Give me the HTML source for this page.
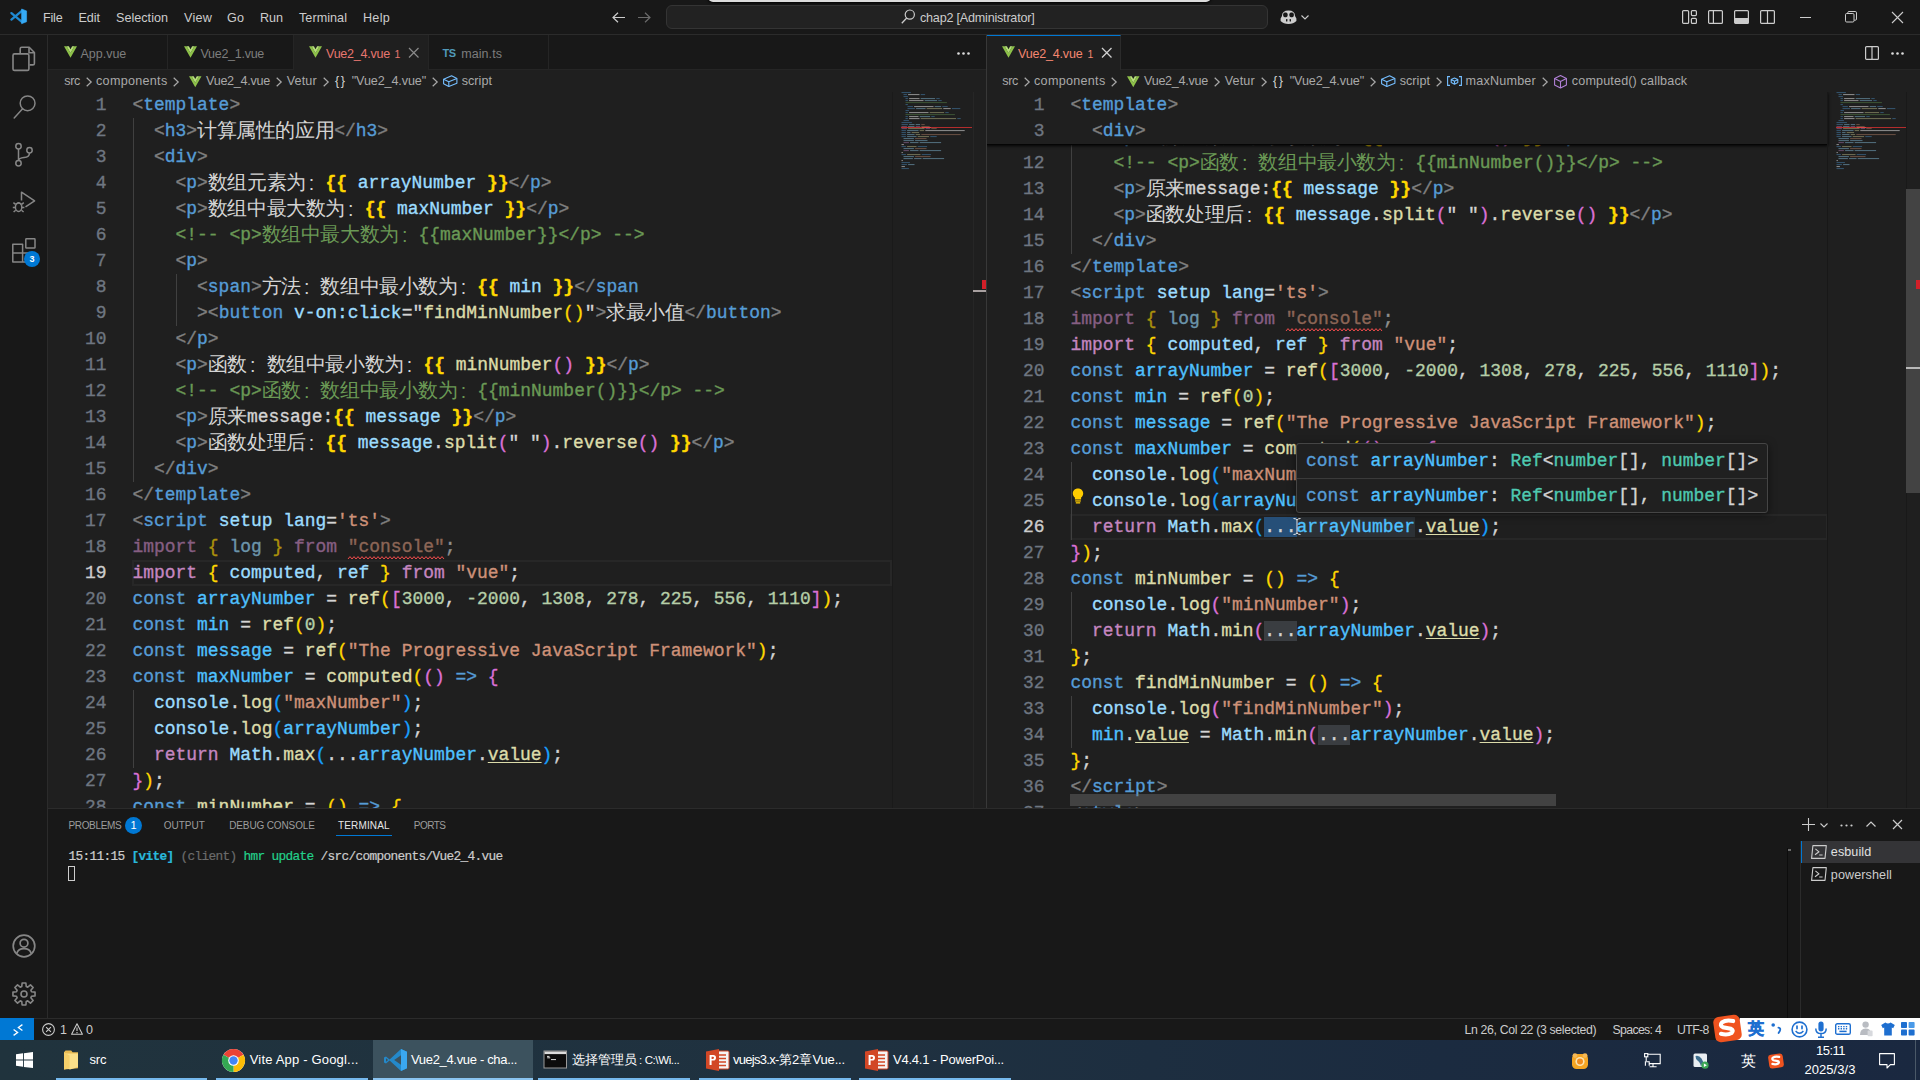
<!DOCTYPE html>
<html><head><meta charset="utf-8"><title>VS Code</title><style>
*{box-sizing:border-box;margin:0;padding:0}
html,body{width:1920px;height:1080px;overflow:hidden;background:#181818;font-family:"Liberation Sans",sans-serif;color:#ccc}
.a{position:absolute}
.t{position:absolute;white-space:pre;font-size:13px;line-height:20px;height:20px;color:#ccc}
.ed{position:absolute;background:#1f1f1f;overflow:hidden;font-family:"Liberation Mono",monospace;font-size:17.95px;color:#d4d4d4;-webkit-text-stroke:0.35px}
.ln{position:absolute;left:0;height:26px;line-height:26px;text-align:right;color:#6e7681;white-space:pre}
.ln.on{color:#ccc}
.cl{position:absolute;height:26px;line-height:26px;white-space:pre}
.z{display:inline-block;font-size:19.6px;font-family:"Liberation Sans",sans-serif;white-space:nowrap;overflow:visible;vertical-align:top;height:26px;line-height:26px;letter-spacing:-0.4px;-webkit-text-stroke:0;position:relative;top:-1px}
.zc{width:19.6px;padding-left:3px;letter-spacing:0;top:0}
.g{color:#808080}.k{color:#569cd6}.c{color:#c586c0}.v{color:#9cdcfe}.n{color:#4fc1ff}.f{color:#dcdcaa}
.s{color:#ce9178}.m{color:#b5cea8}.cm{color:#6a9955}.b1{color:#ffd700}.b2{color:#da70d6}.b3{color:#179fff}
.y{color:#ffd700;font-weight:bold}.ty{color:#4ec9b0}
.u{color:#dcdcaa;text-decoration:underline;text-decoration-thickness:1px;text-underline-offset:2px}
.fade{opacity:.62}
.sq{display:inline-block;height:26px;vertical-align:top;position:relative}
.sq svg{left:0;top:21.5px}
.dots.h2{background:#3a3d41}
.dots.sel{background:#264f78}
.wh{background:#2c3136}
.ig{position:absolute;width:1px;background:#404040}
.hl{position:absolute;height:26px;border:2px solid #272727}
svg{position:absolute;overflow:visible}
</style></head><body>
<div class="a" style="left:0px;top:0px;width:1920px;height:35px;background:#181818;border-bottom:1px solid #2b2b2b"></div>
<svg style="left:9.7px;top:9.3px" width="16.6" height="14.7" viewBox="0 0 16.6 14.7" ><path d="M12.2 1.6L1.4 10.6M12.2 13.1L1.4 4.1" stroke="#1f8ad2" stroke-width="2.3" stroke-linecap="round" fill="none"/><path d="M11.6 0L16.6 1.9V12.8L11.6 14.7z" fill="#35aaf5"/><path d="M11.6 0L16.6 1.9V12.8L11.6 14.7z" fill="none" stroke="#35aaf5" stroke-width=".6" stroke-linejoin="round"/></svg>
<div class="t" style="left:43px;top:7.5px;font-size:12.6px;color:#ccc;letter-spacing:-0.199px;">File</div>
<div class="t" style="left:78.5px;top:7.5px;font-size:12.6px;color:#ccc;letter-spacing:-0.051px;">Edit</div>
<div class="t" style="left:116px;top:7.5px;font-size:12.6px;color:#ccc;letter-spacing:0.021px;">Selection</div>
<div class="t" style="left:184px;top:7.5px;font-size:12.6px;color:#ccc;letter-spacing:0.230px;">View</div>
<div class="t" style="left:227px;top:7.5px;font-size:12.6px;color:#ccc;letter-spacing:0.094px;">Go</div>
<div class="t" style="left:260px;top:7.5px;font-size:12.6px;color:#ccc;letter-spacing:-0.036px;">Run</div>
<div class="t" style="left:299px;top:7.5px;font-size:12.6px;color:#ccc;letter-spacing:0.051px;">Terminal</div>
<div class="t" style="left:363px;top:7.5px;font-size:12.6px;color:#ccc;letter-spacing:0.273px;">Help</div>
<svg style="left:612px;top:12px" width="13" height="11" viewBox="0 0 13 11" ><path d="M6 0.7L1 5.5 6 10.3M1 5.5H13" fill="none" stroke="#ccc" stroke-width="1.2"/></svg>
<svg style="left:638px;top:12px" width="13" height="11" viewBox="0 0 13 11" ><path d="M7 0.7L12 5.5 7 10.3M12 5.5H0" fill="none" stroke="#6b6b6b" stroke-width="1.2"/></svg>
<div class="a" style="left:666px;top:5px;width:602px;height:24px;background:#222222;border:1px solid #343434;border-radius:6px"></div>
<svg style="left:901px;top:9px" width="14" height="15" viewBox="0 0 14 15" ><circle cx="8.8" cy="5.6" r="4.6" fill="none" stroke="#ccc" stroke-width="1.2"/><path d="M5.7 9L0.8 14.2" stroke="#ccc" stroke-width="1.3"/></svg>
<div class="t" style="left:920px;top:7.5px;font-size:12.6px;color:#ccc;letter-spacing:-0.214px;">chap2 [Administrator]</div>
<div class="a" style="left:708px;top:-8px;width:503px;height:10px;background:#dcdcdc;border-radius:6px;box-shadow:0 1px 3px #000"></div>
<svg style="left:1280px;top:9px" width="17" height="16" viewBox="0 0 17 16" ><path d="M2 7Q2 1.5 8.5 1.5 15 1.5 15 7L16.4 9.5V12Q13.5 15 8.5 15 3.5 15 0.6 12V9.5z" fill="#ccc"/><rect x="3.2" y="3.6" width="4.4" height="4.6" rx="1.6" fill="#181818"/><rect x="9.4" y="3.6" width="4.4" height="4.6" rx="1.6" fill="#181818"/><rect x="6" y="10" width="1.4" height="2.6" rx=".6" fill="#181818"/><rect x="9.6" y="10" width="1.4" height="2.6" rx=".6" fill="#181818"/></svg>
<svg style="left:1301px;top:15px" width="8" height="5" viewBox="0 0 8 5" ><path d="M0.5 0.5L4 4 7.5 0.5" fill="none" stroke="#ccc" stroke-width="1.1"/></svg>
<svg style="left:1682px;top:10px" width="15" height="14" viewBox="0 0 15 14" ><g fill="none" stroke="#ccc" stroke-width="1.2"><rect x="0.6" y="0.6" width="6" height="12.8" rx="1"/><rect x="9.4" y="0.6" width="5" height="5" rx="1"/><rect x="9.4" y="8.4" width="5" height="5" rx="1"/></g></svg>
<svg style="left:1708px;top:10px" width="15" height="14" viewBox="0 0 15 14" ><g fill="none" stroke="#ccc" stroke-width="1.2"><rect x="0.6" y="0.6" width="13.8" height="12.8" rx="1"/><path d="M5.4 0.6V13.4"/></g></svg>
<svg style="left:1734px;top:10px" width="15" height="14" viewBox="0 0 15 14" ><g fill="none" stroke="#ccc" stroke-width="1.2"><rect x="0.6" y="0.6" width="13.8" height="12.8" rx="1"/></g><rect x="1" y="8" width="13" height="5.4" fill="#ccc"/></svg>
<svg style="left:1760px;top:10px" width="15" height="14" viewBox="0 0 15 14" ><g fill="none" stroke="#ccc" stroke-width="1.2"><rect x="0.6" y="0.6" width="13.8" height="12.8" rx="1"/><path d="M7.5 0.6V13.4"/></g></svg>
<div class="a" style="left:1800px;top:17px;width:11px;height:1px;background:#ccc;"></div>
<svg style="left:1845px;top:11px" width="12" height="12" viewBox="0 0 12 12" ><g fill="none" stroke="#ccc" stroke-width="1"><rect x="0.5" y="2.5" width="8.5" height="8.5" rx="1.2"/><path d="M2.8 2.5V1.6Q2.8 0.5 3.9 0.5H10.2Q11.5 0.5 11.5 1.8V8Q11.5 9.2 10.4 9.2H9.2"/></g></svg>
<svg style="left:1892.0px;top:12.0px" width="11" height="11" viewBox="0 0 11 11" ><path d="M0 0L11 11M11 0L0 11" stroke="#ccc" stroke-width="1.1" fill="none"/></svg>
<div class="a" style="left:0px;top:35px;width:48px;height:983px;background:#181818;border-right:1px solid #2b2b2b"></div>
<svg style="left:12px;top:46px" width="24" height="24" viewBox="0 0 24 24" ><g fill="none" stroke="#868686" stroke-width="1.6" stroke-linejoin="round"><path d="M8.2 7.6V2.8Q8.2 1.3 9.7 1.3H17.2L22.4 6.5V17.4Q22.4 18.9 20.9 18.9H17.6"/><path d="M17 1.5V6.7H22.2"/><path d="M1 9.4Q1 7.9 2.5 7.9H15.4Q16.9 7.9 16.9 9.4V22.9Q16.9 24.4 15.4 24.4H2.5Q1 24.4 1 22.9z"/></g></svg>
<svg style="left:12px;top:94px" width="24" height="24" viewBox="0 0 24 24" ><g fill="none" stroke="#868686" stroke-width="1.5"><circle cx="15.6" cy="9.3" r="7.4"/><path d="M10.6 14.8L2.2 24" stroke-linecap="round"/></g></svg>
<svg style="left:12px;top:142px" width="24" height="24" viewBox="0 0 24 24" ><g fill="none" stroke="#868686" stroke-width="1.5"><circle cx="6.5" cy="4.3" r="2.7"/><circle cx="6.5" cy="21.3" r="2.7"/><circle cx="17.5" cy="8.2" r="2.7"/><path d="M6.5 7V18.6M17.5 10.9Q17.5 15 12 15.6 7 16.2 6.5 18.6"/></g></svg>
<svg style="left:12px;top:190px" width="24" height="24" viewBox="0 0 24 24" ><g fill="none" stroke="#868686" stroke-width="1.5" stroke-linejoin="round"><path d="M9.5 10.5V2.2L22.6 10.8 13.5 16.8"/><ellipse cx="6.6" cy="17.2" rx="3.2" ry="4.2"/><path d="M3.6 14.3L1.4 12.6M9.6 14.3L11.8 12.6M3.4 17.4H0.8M9.8 17.4H12.4M3.7 20.2L1.6 22M9.5 20.2L11.6 22M4.2 14.2Q6.6 11.4 9 14.2"/></g></svg>
<svg style="left:12px;top:238px" width="24" height="24" viewBox="0 0 24 24" ><g fill="none" stroke="#868686" stroke-width="1.5" stroke-linejoin="round"><path d="M0.8 6.2H10.6V24H0.8zM0.8 15.1H19.6V24H10.6M10.6 15.1V24"/><rect x="13.8" y="0.8" width="9.2" height="9.2" rx="0.6"/></g></svg>
<div class="a" style="left:24px;top:251px;width:16px;height:16px;border-radius:8px;background:#0078d4;color:#fff;font-size:9px;font-weight:bold;line-height:16px;text-align:center">3</div>
<svg style="left:12px;top:934px" width="24" height="24" viewBox="0 0 24 24" ><g fill="none" stroke="#868686" stroke-width="1.7"><circle cx="12" cy="12" r="10.8"/><circle cx="12" cy="9.2" r="3.9"/><path d="M4.8 19.4Q6.2 14.6 12 14.6 17.8 14.6 19.2 19.4"/></g></svg>
<svg style="left:12px;top:982px" width="24" height="24" viewBox="0 0 24 24" ><g fill="none" stroke="#868686" stroke-width="1.6" stroke-linejoin="round"><path d="M23.04 10.11L23.04 13.89L19.47 14.23L18.86 15.71L21.15 18.47L18.47 21.15L15.71 18.86L14.23 19.47L13.89 23.04L10.11 23.04L9.77 19.47L8.29 18.86L5.53 21.15L2.85 18.47L5.14 15.71L4.53 14.23L0.96 13.89L0.96 10.11L4.53 9.77L5.14 8.29L2.85 5.53L5.53 2.85L8.29 5.14L9.77 4.53L10.11 0.96L13.89 0.96L14.23 4.53L15.71 5.14L18.47 2.85L21.15 5.53L18.86 8.29L19.47 9.77z"/><circle cx="12" cy="12" r="3"/></g></svg>
<div class="a" style="left:48px;top:35px;width:938px;height:35px;background:#181818;border-bottom:1px solid #252525"></div>
<div class="a" style="left:986px;top:35px;width:934px;height:35px;background:#181818;border-bottom:1px solid #252525"></div>
<div class="a" style="left:167px;top:35px;width:1px;height:35px;background:#252525;"></div>
<div class="a" style="left:293px;top:35px;width:1px;height:35px;background:#252525;"></div>
<div class="a" style="left:428px;top:35px;width:1px;height:35px;background:#252525;"></div>
<div class="a" style="left:548px;top:35px;width:1px;height:35px;background:#252525;"></div>
<div class="a" style="left:294px;top:35px;width:134px;height:35px;background:#1f1f1f;"></div>
<div class="a" style="left:987px;top:35px;width:134px;height:35px;background:#1f1f1f;border-top:1px solid #0078d4;border-right:1px solid #2b2b2b"></div>
<svg style="left:63.5px;top:46px" width="13" height="12" viewBox="0 0 16 14" ><path d="M0 0H3.2L8 8.3 12.8 0H16L8 14z" fill="#8dc149"/><path d="M3.2 0H6L8 3.5 10 0H12.8L8 8.3z" fill="#b7e07a"/></svg>
<div class="t" style="left:80.5px;top:43.5px;font-size:12.5px;color:#7d7d7d;letter-spacing:-0.011px;">App.vue</div>
<svg style="left:183.5px;top:46px" width="13" height="12" viewBox="0 0 16 14" ><path d="M0 0H3.2L8 8.3 12.8 0H16L8 14z" fill="#8dc149"/><path d="M3.2 0H6L8 3.5 10 0H12.8L8 8.3z" fill="#b7e07a"/></svg>
<div class="t" style="left:200.5px;top:43.5px;font-size:12.5px;color:#7d7d7d;letter-spacing:-0.277px;">Vue2_1.vue</div>
<svg style="left:309px;top:46px" width="13" height="12" viewBox="0 0 16 14" ><path d="M0 0H3.2L8 8.3 12.8 0H16L8 14z" fill="#8dc149"/><path d="M3.2 0H6L8 3.5 10 0H12.8L8 8.3z" fill="#b7e07a"/></svg>
<div class="t" style="left:326px;top:43.5px;font-size:12.5px;color:#e8766f;letter-spacing:-0.227px;">Vue2_4.vue</div>
<div class="t" style="left:394.6px;top:43.5px;font-size:10.5px;color:#e8766f;letter-spacing:-0.444px;">1</div>
<svg style="left:409.25px;top:48.25px" width="9.5" height="9.5" viewBox="0 0 9.5 9.5" ><path d="M0 0L9.5 9.5M9.5 0L0 9.5" stroke="#8a8a8a" stroke-width="1.2" fill="none"/></svg>
<div class="t" style="left:442.5px;top:42.5px;font-size:11px;color:#519aba;letter-spacing:-0.531px;font-weight:bold;">TS</div>
<div class="t" style="left:461.3px;top:43.5px;font-size:12.5px;color:#7d7d7d;letter-spacing:0.058px;">main.ts</div>
<svg style="left:957px;top:51.5px" width="13" height="3" viewBox="0 0 13 3" ><circle cx="1.5" cy="1.5" r="1.3" fill="#ddd"/><circle cx="6.5" cy="1.5" r="1.3" fill="#ddd"/><circle cx="11.5" cy="1.5" r="1.3" fill="#ddd"/></svg>
<svg style="left:1002px;top:46px" width="13" height="12" viewBox="0 0 16 14" ><path d="M0 0H3.2L8 8.3 12.8 0H16L8 14z" fill="#8dc149"/><path d="M3.2 0H6L8 3.5 10 0H12.8L8 8.3z" fill="#b7e07a"/></svg>
<div class="t" style="left:1018px;top:43.5px;font-size:12.5px;color:#f48771;letter-spacing:-0.177px;">Vue2_4.vue</div>
<div class="t" style="left:1087.5px;top:43.5px;font-size:10.5px;color:#f48771;letter-spacing:-0.844px;">1</div>
<svg style="left:1101.75px;top:48.25px" width="9.5" height="9.5" viewBox="0 0 9.5 9.5" ><path d="M0 0L9.5 9.5M9.5 0L0 9.5" stroke="#d0d0d0" stroke-width="1.3" fill="none"/></svg>
<svg style="left:1865px;top:46px" width="14" height="14" viewBox="0 0 14 14" ><g fill="none" stroke="#ccc" stroke-width="1.2"><rect x="0.6" y="0.6" width="12.8" height="12.8" rx="1"/><path d="M7 0.6V13.4"/></g></svg>
<svg style="left:1891px;top:51.5px" width="13" height="3" viewBox="0 0 13 3" ><circle cx="1.5" cy="1.5" r="1.3" fill="#ddd"/><circle cx="6.5" cy="1.5" r="1.3" fill="#ddd"/><circle cx="11.5" cy="1.5" r="1.3" fill="#ddd"/></svg>
<div class="a" style="left:48px;top:70px;width:938px;height:22px;background:#1f1f1f;"></div>
<div class="a" style="left:987px;top:70px;width:933px;height:22px;background:#1f1f1f;"></div>
<div class="a" style="left:986px;top:35px;width:1px;height:773px;background:#383838;"></div>
<div class="t" style="left:64.25px;top:71.0px;font-size:12.6px;color:#a9a9a9;letter-spacing:-0.349px;">src</div><svg style="left:85.5px;top:76.5px" width="6" height="10" viewBox="0 0 6 10" ><path d="M0.7 0.7L5.2 5 0.7 9.3" fill="none" stroke="#a9a9a9" stroke-width="1.2"/></svg><div class="t" style="left:96px;top:71.0px;font-size:12.6px;color:#a9a9a9;letter-spacing:0.289px;">components</div><svg style="left:173px;top:76.5px" width="6" height="10" viewBox="0 0 6 10" ><path d="M0.7 0.7L5.2 5 0.7 9.3" fill="none" stroke="#a9a9a9" stroke-width="1.2"/></svg><svg style="left:189px;top:75.5px" width="12.5" height="11.5" viewBox="0 0 16 14" ><path d="M0 0H3.2L8 8.3 12.8 0H16L8 14z" fill="#8dc149"/><path d="M3.2 0H6L8 3.5 10 0H12.8L8 8.3z" fill="#b7e07a"/></svg><div class="t" style="left:206px;top:71.0px;font-size:12.6px;color:#a9a9a9;letter-spacing:-0.277px;">Vue2_4.vue</div><svg style="left:275.5px;top:76.5px" width="6" height="10" viewBox="0 0 6 10" ><path d="M0.7 0.7L5.2 5 0.7 9.3" fill="none" stroke="#a9a9a9" stroke-width="1.2"/></svg><div class="t" style="left:286.75px;top:71.0px;font-size:12.6px;color:#a9a9a9;letter-spacing:0.119px;">Vetur</div><svg style="left:322.5px;top:76.5px" width="6" height="10" viewBox="0 0 6 10" ><path d="M0.7 0.7L5.2 5 0.7 9.3" fill="none" stroke="#a9a9a9" stroke-width="1.2"/></svg><div class="t" style="left:335px;top:70.5px;font-size:12.6px;color:#d4d4d4;letter-spacing:1.664px;">{}</div><div class="t" style="left:351.75px;top:71.0px;font-size:12.6px;color:#a9a9a9;letter-spacing:-0.121px;">"Vue2_4.vue"</div><svg style="left:431.75px;top:76.5px" width="6" height="10" viewBox="0 0 6 10" ><path d="M0.7 0.7L5.2 5 0.7 9.3" fill="none" stroke="#a9a9a9" stroke-width="1.2"/></svg><svg style="left:443px;top:75px" width="14.5" height="12" viewBox="0 0 14.5 12" ><g fill="none" stroke="#75beff" stroke-width="1.1" stroke-linejoin="round"><path d="M0.6 4.2L8.6 0.8 13.9 3.4V8.2L5.8 11.4 0.6 8.8z"/><path d="M0.6 4.2L5.8 6.8 13.9 3.4M5.8 6.8V11.4"/></g></svg><div class="t" style="left:461.7px;top:71.0px;font-size:12.6px;color:#a9a9a9;letter-spacing:0.034px;">script</div>
<div class="t" style="left:1002.25px;top:71.0px;font-size:12.6px;color:#a9a9a9;letter-spacing:-0.349px;">src</div><svg style="left:1023.5px;top:76.5px" width="6" height="10" viewBox="0 0 6 10" ><path d="M0.7 0.7L5.2 5 0.7 9.3" fill="none" stroke="#a9a9a9" stroke-width="1.2"/></svg><div class="t" style="left:1034px;top:71.0px;font-size:12.6px;color:#a9a9a9;letter-spacing:0.289px;">components</div><svg style="left:1111px;top:76.5px" width="6" height="10" viewBox="0 0 6 10" ><path d="M0.7 0.7L5.2 5 0.7 9.3" fill="none" stroke="#a9a9a9" stroke-width="1.2"/></svg><svg style="left:1127px;top:75.5px" width="12.5" height="11.5" viewBox="0 0 16 14" ><path d="M0 0H3.2L8 8.3 12.8 0H16L8 14z" fill="#8dc149"/><path d="M3.2 0H6L8 3.5 10 0H12.8L8 8.3z" fill="#b7e07a"/></svg><div class="t" style="left:1144px;top:71.0px;font-size:12.6px;color:#a9a9a9;letter-spacing:-0.277px;">Vue2_4.vue</div><svg style="left:1213.5px;top:76.5px" width="6" height="10" viewBox="0 0 6 10" ><path d="M0.7 0.7L5.2 5 0.7 9.3" fill="none" stroke="#a9a9a9" stroke-width="1.2"/></svg><div class="t" style="left:1224.75px;top:71.0px;font-size:12.6px;color:#a9a9a9;letter-spacing:0.119px;">Vetur</div><svg style="left:1260.5px;top:76.5px" width="6" height="10" viewBox="0 0 6 10" ><path d="M0.7 0.7L5.2 5 0.7 9.3" fill="none" stroke="#a9a9a9" stroke-width="1.2"/></svg><div class="t" style="left:1273px;top:70.5px;font-size:12.6px;color:#d4d4d4;letter-spacing:1.664px;">{}</div><div class="t" style="left:1289.75px;top:71.0px;font-size:12.6px;color:#a9a9a9;letter-spacing:-0.121px;">"Vue2_4.vue"</div><svg style="left:1369.75px;top:76.5px" width="6" height="10" viewBox="0 0 6 10" ><path d="M0.7 0.7L5.2 5 0.7 9.3" fill="none" stroke="#a9a9a9" stroke-width="1.2"/></svg><svg style="left:1381px;top:75px" width="14.5" height="12" viewBox="0 0 14.5 12" ><g fill="none" stroke="#75beff" stroke-width="1.1" stroke-linejoin="round"><path d="M0.6 4.2L8.6 0.8 13.9 3.4V8.2L5.8 11.4 0.6 8.8z"/><path d="M0.6 4.2L5.8 6.8 13.9 3.4M5.8 6.8V11.4"/></g></svg><div class="t" style="left:1399.7px;top:71.0px;font-size:12.6px;color:#a9a9a9;letter-spacing:0.034px;">script</div>
<svg style="left:1436px;top:76.5px" width="6" height="10" viewBox="0 0 6 10" ><path d="M0.7 0.7L5.2 5 0.7 9.3" fill="none" stroke="#a9a9a9" stroke-width="1.2"/></svg>
<svg style="left:1447px;top:76px" width="15" height="10" viewBox="0 0 15 10" ><g fill="none" stroke="#75beff" stroke-width="1.1"><path d="M3 0.6H0.6V9.4H3M12 0.6H14.4V9.4H12"/><path d="M4.2 3.6L7.5 2 10.8 3.6V6.6L7.5 8.2 4.2 6.6zM4.2 3.6L7.5 5.2 10.8 3.6M7.5 5.2V8.2" stroke-linejoin="round"/></g></svg>
<div class="t" style="left:1465.5px;top:71.0px;font-size:12.6px;color:#a9a9a9;letter-spacing:0.212px;">maxNumber</div>
<svg style="left:1542px;top:76.5px" width="6" height="10" viewBox="0 0 6 10" ><path d="M0.7 0.7L5.2 5 0.7 9.3" fill="none" stroke="#a9a9a9" stroke-width="1.2"/></svg>
<svg style="left:1554px;top:74.5px" width="13" height="13.5" viewBox="0 0 13 13.5" ><g fill="none" stroke="#b180d7" stroke-width="1.1" stroke-linejoin="round"><path d="M6.5 0.6L12.4 3.6V9.9L6.5 12.9 0.6 9.9V3.6z"/><path d="M0.6 3.6L6.5 6.6 12.4 3.6M6.5 6.6V12.9"/></g></svg>
<div class="t" style="left:1571.8px;top:71.0px;font-size:12.6px;color:#a9a9a9;letter-spacing:0.147px;">computed() callback</div>
<div class="ed" style="left:48px;top:92px;width:938px;height:716px"><div class="hl" style="left:84px;top:468px;width:760px"></div>
<div class="ig" style="left:85px;top:26px;height:364px"></div>
<div class="ig" style="left:128px;top:182px;height:52px"></div>
<div class="ig" style="left:85px;top:598px;height:78px"></div>
<div class="ln" style="top:0px;width:58.5px">1</div>
<div class="cl" style="top:0px;left:84.5px"><span class="g">&lt;</span><span class="k">template</span><span class="g">&gt;</span></div>
<div class="ln" style="top:26px;width:58.5px">2</div>
<div class="cl" style="top:26px;left:84.5px">  <span class="g">&lt;</span><span class="k">h3</span><span class="g">&gt;</span><span class="z" style="width:137.2px">计算属性的应用</span><span class="g">&lt;/</span><span class="k">h3</span><span class="g">&gt;</span></div>
<div class="ln" style="top:52px;width:58.5px">3</div>
<div class="cl" style="top:52px;left:84.5px">  <span class="g">&lt;</span><span class="k">div</span><span class="g">&gt;</span></div>
<div class="ln" style="top:78px;width:58.5px">4</div>
<div class="cl" style="top:78px;left:84.5px">    <span class="g">&lt;</span><span class="k">p</span><span class="g">&gt;</span><span class="z" style="width:98.0px">数组元素为</span><span class="z zc">:</span><span class="y">{{</span> <span class="v">arrayNumber</span> <span class="y">}}</span><span class="g">&lt;/</span><span class="k">p</span><span class="g">&gt;</span></div>
<div class="ln" style="top:104px;width:58.5px">5</div>
<div class="cl" style="top:104px;left:84.5px">    <span class="g">&lt;</span><span class="k">p</span><span class="g">&gt;</span><span class="z" style="width:137.2px">数组中最大数为</span><span class="z zc">:</span><span class="y">{{</span> <span class="v">maxNumber</span> <span class="y">}}</span><span class="g">&lt;/</span><span class="k">p</span><span class="g">&gt;</span></div>
<div class="ln" style="top:130px;width:58.5px">6</div>
<div class="cl" style="top:130px;left:84.5px">    <span class="cm">&lt;!-- &lt;p&gt;</span><span class="z cm" style="width:137.2px">数组中最大数为</span><span class="z zc cm">:</span><span class="cm">{{maxNumber}}&lt;/p&gt; --&gt;</span></div>
<div class="ln" style="top:156px;width:58.5px">7</div>
<div class="cl" style="top:156px;left:84.5px">    <span class="g">&lt;</span><span class="k">p</span><span class="g">&gt;</span></div>
<div class="ln" style="top:182px;width:58.5px">8</div>
<div class="cl" style="top:182px;left:84.5px">      <span class="g">&lt;</span><span class="k">span</span><span class="g">&gt;</span><span class="z" style="width:39.2px">方法</span><span class="z zc">:</span><span class="z" style="width:137.2px">数组中最小数为</span><span class="z zc">:</span><span class="y">{{</span> <span class="v">min</span> <span class="y">}}</span><span class="g">&lt;/</span><span class="k">span</span></div>
<div class="ln" style="top:208px;width:58.5px">9</div>
<div class="cl" style="top:208px;left:84.5px">      <span class="g">&gt;&lt;</span><span class="k">button</span> <span class="v">v-on:click</span>="<span class="f">findMinNumber</span><span class="b1">()</span>"<span class="g">&gt;</span><span class="z" style="width:78.4px">求最小值</span><span class="g">&lt;/</span><span class="k">button</span><span class="g">&gt;</span></div>
<div class="ln" style="top:234px;width:58.5px">10</div>
<div class="cl" style="top:234px;left:84.5px">    <span class="g">&lt;/</span><span class="k">p</span><span class="g">&gt;</span></div>
<div class="ln" style="top:260px;width:58.5px">11</div>
<div class="cl" style="top:260px;left:84.5px">    <span class="g">&lt;</span><span class="k">p</span><span class="g">&gt;</span><span class="z" style="width:39.2px">函数</span><span class="z zc">:</span><span class="z" style="width:137.2px">数组中最小数为</span><span class="z zc">:</span><span class="y">{{</span> <span class="f">minNumber</span><span class="b2">()</span> <span class="y">}}</span><span class="g">&lt;/</span><span class="k">p</span><span class="g">&gt;</span></div>
<div class="ln" style="top:286px;width:58.5px">12</div>
<div class="cl" style="top:286px;left:84.5px">    <span class="cm">&lt;!-- &lt;p&gt;</span><span class="z cm" style="width:39.2px">函数</span><span class="z zc cm">:</span><span class="z cm" style="width:137.2px">数组中最小数为</span><span class="z zc cm">:</span><span class="cm">{{minNumber()}}&lt;/p&gt; --&gt;</span></div>
<div class="ln" style="top:312px;width:58.5px">13</div>
<div class="cl" style="top:312px;left:84.5px">    <span class="g">&lt;</span><span class="k">p</span><span class="g">&gt;</span><span class="z" style="width:39.2px">原来</span>message:<span class="y">{{</span> <span class="v">message</span> <span class="y">}}</span><span class="g">&lt;/</span><span class="k">p</span><span class="g">&gt;</span></div>
<div class="ln" style="top:338px;width:58.5px">14</div>
<div class="cl" style="top:338px;left:84.5px">    <span class="g">&lt;</span><span class="k">p</span><span class="g">&gt;</span><span class="z" style="width:98.0px">函数处理后</span><span class="z zc">:</span><span class="y">{{</span> <span class="v">message</span>.<span class="f">split</span><span class="b2">(</span>" "<span class="b2">)</span>.<span class="f">reverse</span><span class="b2">()</span> <span class="y">}}</span><span class="g">&lt;/</span><span class="k">p</span><span class="g">&gt;</span></div>
<div class="ln" style="top:364px;width:58.5px">15</div>
<div class="cl" style="top:364px;left:84.5px">  <span class="g">&lt;/</span><span class="k">div</span><span class="g">&gt;</span></div>
<div class="ln" style="top:390px;width:58.5px">16</div>
<div class="cl" style="top:390px;left:84.5px"><span class="g">&lt;/</span><span class="k">template</span><span class="g">&gt;</span></div>
<div class="ln" style="top:416px;width:58.5px">17</div>
<div class="cl" style="top:416px;left:84.5px"><span class="g">&lt;</span><span class="k">script</span> <span class="v">setup</span> <span class="v">lang</span>=<span class="s">'ts'</span><span class="g">&gt;</span></div>
<div class="ln" style="top:442px;width:58.5px">18</div>
<div class="cl" style="top:442px;left:84.5px"><span class="fade"><span class="c">import</span> <span class="b1">{</span> <span class="v">log</span> <span class="b1">}</span> <span class="c">from</span> </span><span class="sq"><span class="fade"><span class="s">"console"</span></span><svg width="97" height="4" viewBox="0 0 97 4"><path d="M0 3L2 0.6L4 3L6 0.6L8 3L10 0.6L12 3L14 0.6L16 3L18 0.6L20 3L22 0.6L24 3L26 0.6L28 3L30 0.6L32 3L34 0.6L36 3L38 0.6L40 3L42 0.6L44 3L46 0.6L48 3L50 0.6L52 3L54 0.6L56 3L58 0.6L60 3L62 0.6L64 3L66 0.6L68 3L70 0.6L72 3L74 0.6L76 3L78 0.6L80 3L82 0.6L84 3L86 0.6L88 3L90 0.6L92 3L94 0.6L96 3" fill="none" stroke="#f14c4c" stroke-width="1"/></svg></span><span class="fade">;</span></div>
<div class="ln on" style="top:468px;width:58.5px">19</div>
<div class="cl" style="top:468px;left:84.5px"><span class="c">import</span> <span class="b1">{</span> <span class="v">computed</span>, <span class="v">ref</span> <span class="b1">}</span> <span class="c">from</span> <span class="s">"vue"</span>;</div>
<div class="ln" style="top:494px;width:58.5px">20</div>
<div class="cl" style="top:494px;left:84.5px"><span class="k">const</span> <span class="n">arrayNumber</span> = <span class="f">ref</span><span class="b1">(</span><span class="b2">[</span><span class="m">3000</span>, <span class="m">-2000</span>, <span class="m">1308</span>, <span class="m">278</span>, <span class="m">225</span>, <span class="m">556</span>, <span class="m">1110</span><span class="b2">]</span><span class="b1">)</span>;</div>
<div class="ln" style="top:520px;width:58.5px">21</div>
<div class="cl" style="top:520px;left:84.5px"><span class="k">const</span> <span class="n">min</span> = <span class="f">ref</span><span class="b1">(</span><span class="m">0</span><span class="b1">)</span>;</div>
<div class="ln" style="top:546px;width:58.5px">22</div>
<div class="cl" style="top:546px;left:84.5px"><span class="k">const</span> <span class="n">message</span> = <span class="f">ref</span><span class="b1">(</span><span class="s">"The Progressive JavaScript Framework"</span><span class="b1">)</span>;</div>
<div class="ln" style="top:572px;width:58.5px">23</div>
<div class="cl" style="top:572px;left:84.5px"><span class="k">const</span> <span class="n">maxNumber</span> = <span class="f">computed</span><span class="b1">(</span><span class="b2">()</span> <span class="k">=&gt;</span> <span class="b2">{</span></div>
<div class="ln" style="top:598px;width:58.5px">24</div>
<div class="cl" style="top:598px;left:84.5px">  <span class="v">console</span>.<span class="f">log</span><span class="b3">(</span><span class="s">"maxNumber"</span><span class="b3">)</span>;</div>
<div class="ln" style="top:624px;width:58.5px">25</div>
<div class="cl" style="top:624px;left:84.5px">  <span class="v">console</span>.<span class="f">log</span><span class="b3">(</span><span class="n">arrayNumber</span><span class="b3">)</span>;</div>
<div class="ln" style="top:650px;width:58.5px">26</div>
<div class="cl" style="top:650px;left:84.5px">  <span class="c">return</span> <span class="v">Math</span>.<span class="f">max</span><span class="b3">(</span><span class="dots">...</span><span class="n">arrayNumber</span>.<span class="v u">value</span><span class="b3">)</span>;</div>
<div class="ln" style="top:676px;width:58.5px">27</div>
<div class="cl" style="top:676px;left:84.5px"><span class="b2">}</span><span class="b1">)</span>;</div>
<div class="ln" style="top:702px;width:58.5px">28</div>
<div class="cl" style="top:702px;left:84.5px"><span class="k">const</span> <span class="f">minNumber</span> = <span class="b1">()</span> <span class="k">=&gt;</span> <span class="b1">{</span></div></div>
<div class="a" style="left:892px;top:92px;width:1px;height:716px;background:#1a1a1a;"></div>
<div class="a" style="left:973px;top:92px;width:1px;height:716px;background:#262626;"></div>
<svg style="left:0;top:0;opacity:.62" width="1920" height="1080" viewBox="0 0 1920 1080"><rect x="901.5" y="92" width="9.4" height="1.1" fill="#3f6f96"/><rect x="903.5" y="94" width="3.4" height="1.1" fill="#3f6f96"/><rect x="908.1" y="94" width="11.4" height="1.1" fill="#c4c4c4"/><rect x="920.7" y="94" width="4.4" height="1.1" fill="#3f6f96"/><rect x="903.5" y="96" width="4.4" height="1.1" fill="#3f6f96"/><rect x="905.5" y="98" width="2.4" height="1.1" fill="#3f6f96"/><rect x="909.1" y="98" width="10.4" height="1.1" fill="#c4c4c4"/><rect x="920.7" y="98" width="14.4" height="1.1" fill="#6c97ad"/><rect x="936.3" y="98" width="3.4" height="1.1" fill="#3f6f96"/><rect x="905.5" y="100" width="2.4" height="1.1" fill="#3f6f96"/><rect x="909.1" y="100" width="14.4" height="1.1" fill="#c4c4c4"/><rect x="924.7" y="100" width="12.4" height="1.1" fill="#6c97ad"/><rect x="938.3" y="100" width="3.4" height="1.1" fill="#3f6f96"/><rect x="905.5" y="102" width="41.4" height="1.1" fill="#4a6b3f"/><rect x="905.5" y="104" width="2.4" height="1.1" fill="#3f6f96"/><rect x="907.5" y="106" width="5.4" height="1.1" fill="#3f6f96"/><rect x="914.1" y="106" width="19.4" height="1.1" fill="#c4c4c4"/><rect x="934.7" y="106" width="6.4" height="1.1" fill="#6c97ad"/><rect x="942.3" y="106" width="5.4" height="1.1" fill="#3f6f96"/><rect x="907.5" y="108" width="7.4" height="1.1" fill="#3f6f96"/><rect x="916.1" y="108" width="9.4" height="1.1" fill="#6c97ad"/><rect x="926.7" y="108" width="15.4" height="1.1" fill="#97976f"/><rect x="943.3" y="108" width="7.4" height="1.1" fill="#c4c4c4"/><rect x="951.9" y="108" width="8.4" height="1.1" fill="#3f6f96"/><rect x="905.5" y="110" width="3.4" height="1.1" fill="#3f6f96"/><rect x="905.5" y="112" width="2.4" height="1.1" fill="#3f6f96"/><rect x="909.1" y="112" width="19.4" height="1.1" fill="#c4c4c4"/><rect x="929.7" y="112" width="14.4" height="1.1" fill="#97976f"/><rect x="945.3" y="112" width="3.4" height="1.1" fill="#3f6f96"/><rect x="905.5" y="114" width="49.4" height="1.1" fill="#4a6b3f"/><rect x="905.5" y="116" width="2.4" height="1.1" fill="#3f6f96"/><rect x="909.1" y="116" width="9.4" height="1.1" fill="#c4c4c4"/><rect x="919.7" y="116" width="10.4" height="1.1" fill="#6c97ad"/><rect x="931.3" y="116" width="3.4" height="1.1" fill="#3f6f96"/><rect x="905.5" y="118" width="2.4" height="1.1" fill="#3f6f96"/><rect x="909.1" y="118" width="10.4" height="1.1" fill="#c4c4c4"/><rect x="920.7" y="118" width="35.4" height="1.1" fill="#97976f"/><rect x="957.3" y="118" width="3.4" height="1.1" fill="#3f6f96"/><rect x="903.5" y="120" width="5.4" height="1.1" fill="#3f6f96"/><rect x="901.5" y="122" width="10.4" height="1.1" fill="#3f6f96"/><rect x="901.5" y="124" width="6.4" height="1.1" fill="#3f6f96"/><rect x="909.1" y="124" width="5.4" height="1.1" fill="#6c97ad"/><rect x="915.7" y="124" width="4.4" height="1.1" fill="#6c97ad"/><rect x="921.3" y="124" width="3.4" height="1.1" fill="#8d6654"/><rect x="901.5" y="126" width="5.4" height="1.1" fill="#84608a"/><rect x="908.1" y="126" width="6.4" height="1.1" fill="#6c97ad"/><rect x="915.7" y="126" width="4.4" height="1.1" fill="#84608a"/><rect x="921.3" y="126" width="8.4" height="1.1" fill="#8d6654"/><rect x="901.5" y="128" width="5.4" height="1.1" fill="#84608a"/><rect x="908.1" y="128" width="16.4" height="1.1" fill="#97976f"/><rect x="925.7" y="128" width="4.4" height="1.1" fill="#84608a"/><rect x="931.3" y="128" width="5.4" height="1.1" fill="#8d6654"/><rect x="901.5" y="130" width="4.4" height="1.1" fill="#3f6f96"/><rect x="907.1" y="130" width="11.4" height="1.1" fill="#6c97ad"/><rect x="919.7" y="130" width="4.4" height="1.1" fill="#97976f"/><rect x="925.3" y="130" width="39.4" height="1.1" fill="#c4c4c4"/><rect x="901.5" y="132" width="4.4" height="1.1" fill="#3f6f96"/><rect x="907.1" y="132" width="3.4" height="1.1" fill="#6c97ad"/><rect x="911.7" y="132" width="7.4" height="1.1" fill="#97976f"/><rect x="901.5" y="134" width="4.4" height="1.1" fill="#3f6f96"/><rect x="907.1" y="134" width="7.4" height="1.1" fill="#6c97ad"/><rect x="915.7" y="134" width="4.4" height="1.1" fill="#97976f"/><rect x="921.3" y="134" width="39.4" height="1.1" fill="#8d6654"/><rect x="901.5" y="136" width="4.4" height="1.1" fill="#3f6f96"/><rect x="907.1" y="136" width="9.4" height="1.1" fill="#6c97ad"/><rect x="917.7" y="136" width="11.4" height="1.1" fill="#97976f"/><rect x="930.3" y="136" width="6.4" height="1.1" fill="#3f6f96"/><rect x="903.5" y="138" width="10.4" height="1.1" fill="#6c97ad"/><rect x="915.1" y="138" width="11.4" height="1.1" fill="#8d6654"/><rect x="903.5" y="140" width="10.4" height="1.1" fill="#6c97ad"/><rect x="915.1" y="140" width="12.4" height="1.1" fill="#6c97ad"/><rect x="903.5" y="142" width="5.4" height="1.1" fill="#84608a"/><rect x="910.1" y="142" width="8.4" height="1.1" fill="#6c97ad"/><rect x="919.7" y="142" width="21.4" height="1.1" fill="#6c97ad"/><rect x="901.5" y="144" width="2.4" height="1.1" fill="#c4c4c4"/><rect x="901.5" y="146" width="4.4" height="1.1" fill="#3f6f96"/><rect x="907.1" y="146" width="9.4" height="1.1" fill="#97976f"/><rect x="917.7" y="146" width="9.4" height="1.1" fill="#3f6f96"/><rect x="903.5" y="148" width="10.4" height="1.1" fill="#6c97ad"/><rect x="915.1" y="148" width="11.4" height="1.1" fill="#8d6654"/><rect x="903.5" y="150" width="5.4" height="1.1" fill="#84608a"/><rect x="910.1" y="150" width="8.4" height="1.1" fill="#6c97ad"/><rect x="919.7" y="150" width="21.4" height="1.1" fill="#6c97ad"/><rect x="901.5" y="152" width="1.4" height="1.1" fill="#c4c4c4"/><rect x="901.5" y="154" width="4.4" height="1.1" fill="#3f6f96"/><rect x="907.1" y="154" width="13.4" height="1.1" fill="#97976f"/><rect x="921.7" y="154" width="9.4" height="1.1" fill="#3f6f96"/><rect x="903.5" y="156" width="10.4" height="1.1" fill="#6c97ad"/><rect x="915.1" y="156" width="15.4" height="1.1" fill="#8d6654"/><rect x="903.5" y="158" width="9.4" height="1.1" fill="#6c97ad"/><rect x="914.1" y="158" width="7.4" height="1.1" fill="#6c97ad"/><rect x="922.7" y="158" width="21.4" height="1.1" fill="#6c97ad"/><rect x="901.5" y="160" width="1.4" height="1.1" fill="#c4c4c4"/><rect x="901.5" y="162" width="8.4" height="1.1" fill="#3f6f96"/><rect x="901.5" y="164" width="5.4" height="1.1" fill="#3f6f96"/><rect x="908.1" y="164" width="6.4" height="1.1" fill="#6c97ad"/><rect x="901.5" y="166" width="3.4" height="1.1" fill="#c4c4c4"/><rect x="901.5" y="168" width="7.4" height="1.1" fill="#3f6f96"/></svg>
<div class="a" style="left:901px;top:127px;width:71px;height:1px;background:#b32d2d;"></div>
<div class="a" style="left:922px;top:126.5px;width:9px;height:1.5px;background:#e04545;"></div>
<div class="a" style="left:982px;top:280px;width:4px;height:9px;background:#d21f28;"></div>
<div class="a" style="left:973px;top:290px;width:13px;height:2px;background:#a8a0a0;"></div>
<div class="ed" style="left:986px;top:92px;width:934px;height:716px"><div class="hl" style="left:84px;top:422px;width:758px"></div>
<div class="ig" style="left:85px;top:32px;height:130px"></div>
<div class="ig" style="left:85px;top:370px;height:78px"></div>
<div class="ig" style="left:85px;top:500px;height:52px"></div>
<div class="ig" style="left:85px;top:604px;height:52px"></div>
<div class="ln" style="top:32px;width:58.5px">11</div>
<div class="cl" style="top:32px;left:84.5px">    <span class="g">&lt;</span><span class="k">p</span><span class="g">&gt;</span><span class="z" style="width:39.2px">函数</span><span class="z zc">:</span><span class="z" style="width:137.2px">数组中最小数为</span><span class="z zc">:</span><span class="y">{{</span> <span class="f">minNumber</span><span class="b2">()</span> <span class="y">}}</span><span class="g">&lt;/</span><span class="k">p</span><span class="g">&gt;</span></div>
<div class="ln" style="top:58px;width:58.5px">12</div>
<div class="cl" style="top:58px;left:84.5px">    <span class="cm">&lt;!-- &lt;p&gt;</span><span class="z cm" style="width:39.2px">函数</span><span class="z zc cm">:</span><span class="z cm" style="width:137.2px">数组中最小数为</span><span class="z zc cm">:</span><span class="cm">{{minNumber()}}&lt;/p&gt; --&gt;</span></div>
<div class="ln" style="top:84px;width:58.5px">13</div>
<div class="cl" style="top:84px;left:84.5px">    <span class="g">&lt;</span><span class="k">p</span><span class="g">&gt;</span><span class="z" style="width:39.2px">原来</span>message:<span class="y">{{</span> <span class="v">message</span> <span class="y">}}</span><span class="g">&lt;/</span><span class="k">p</span><span class="g">&gt;</span></div>
<div class="ln" style="top:110px;width:58.5px">14</div>
<div class="cl" style="top:110px;left:84.5px">    <span class="g">&lt;</span><span class="k">p</span><span class="g">&gt;</span><span class="z" style="width:98.0px">函数处理后</span><span class="z zc">:</span><span class="y">{{</span> <span class="v">message</span>.<span class="f">split</span><span class="b2">(</span>" "<span class="b2">)</span>.<span class="f">reverse</span><span class="b2">()</span> <span class="y">}}</span><span class="g">&lt;/</span><span class="k">p</span><span class="g">&gt;</span></div>
<div class="ln" style="top:136px;width:58.5px">15</div>
<div class="cl" style="top:136px;left:84.5px">  <span class="g">&lt;/</span><span class="k">div</span><span class="g">&gt;</span></div>
<div class="ln" style="top:162px;width:58.5px">16</div>
<div class="cl" style="top:162px;left:84.5px"><span class="g">&lt;/</span><span class="k">template</span><span class="g">&gt;</span></div>
<div class="ln" style="top:188px;width:58.5px">17</div>
<div class="cl" style="top:188px;left:84.5px"><span class="g">&lt;</span><span class="k">script</span> <span class="v">setup</span> <span class="v">lang</span>=<span class="s">'ts'</span><span class="g">&gt;</span></div>
<div class="ln" style="top:214px;width:58.5px">18</div>
<div class="cl" style="top:214px;left:84.5px"><span class="fade"><span class="c">import</span> <span class="b1">{</span> <span class="v">log</span> <span class="b1">}</span> <span class="c">from</span> </span><span class="sq"><span class="fade"><span class="s">"console"</span></span><svg width="97" height="4" viewBox="0 0 97 4"><path d="M0 3L2 0.6L4 3L6 0.6L8 3L10 0.6L12 3L14 0.6L16 3L18 0.6L20 3L22 0.6L24 3L26 0.6L28 3L30 0.6L32 3L34 0.6L36 3L38 0.6L40 3L42 0.6L44 3L46 0.6L48 3L50 0.6L52 3L54 0.6L56 3L58 0.6L60 3L62 0.6L64 3L66 0.6L68 3L70 0.6L72 3L74 0.6L76 3L78 0.6L80 3L82 0.6L84 3L86 0.6L88 3L90 0.6L92 3L94 0.6L96 3" fill="none" stroke="#f14c4c" stroke-width="1"/></svg></span><span class="fade">;</span></div>
<div class="ln" style="top:240px;width:58.5px">19</div>
<div class="cl" style="top:240px;left:84.5px"><span class="c">import</span> <span class="b1">{</span> <span class="v">computed</span>, <span class="v">ref</span> <span class="b1">}</span> <span class="c">from</span> <span class="s">"vue"</span>;</div>
<div class="ln" style="top:266px;width:58.5px">20</div>
<div class="cl" style="top:266px;left:84.5px"><span class="k">const</span> <span class="n">arrayNumber</span> = <span class="f">ref</span><span class="b1">(</span><span class="b2">[</span><span class="m">3000</span>, <span class="m">-2000</span>, <span class="m">1308</span>, <span class="m">278</span>, <span class="m">225</span>, <span class="m">556</span>, <span class="m">1110</span><span class="b2">]</span><span class="b1">)</span>;</div>
<div class="ln" style="top:292px;width:58.5px">21</div>
<div class="cl" style="top:292px;left:84.5px"><span class="k">const</span> <span class="n">min</span> = <span class="f">ref</span><span class="b1">(</span><span class="m">0</span><span class="b1">)</span>;</div>
<div class="ln" style="top:318px;width:58.5px">22</div>
<div class="cl" style="top:318px;left:84.5px"><span class="k">const</span> <span class="n">message</span> = <span class="f">ref</span><span class="b1">(</span><span class="s">"The Progressive JavaScript Framework"</span><span class="b1">)</span>;</div>
<div class="ln" style="top:344px;width:58.5px">23</div>
<div class="cl" style="top:344px;left:84.5px"><span class="k">const</span> <span class="n">maxNumber</span> = <span class="f">computed</span><span class="b1">(</span><span class="b2">()</span> <span class="k">=&gt;</span> <span class="b2">{</span></div>
<div class="ln" style="top:370px;width:58.5px">24</div>
<div class="cl" style="top:370px;left:84.5px">  <span class="v">console</span>.<span class="f">log</span><span class="b3">(</span><span class="s">"maxNumber"</span><span class="b3">)</span>;</div>
<div class="ln" style="top:396px;width:58.5px">25</div>
<div class="cl" style="top:396px;left:84.5px">  <span class="v">console</span>.<span class="f">log</span><span class="b3">(</span><span class="n">arrayNumber</span><span class="b3">)</span>;</div>
<div class="ln on" style="top:422px;width:58.5px">26</div>
<div class="cl" style="top:422px;left:84.5px">  <span class="c">return</span> <span class="v">Math</span>.<span class="f">max</span><span class="b3">(</span><span class="dots sel">...</span><span class="wh"><span class="n">arrayNumber</span></span>.<span class="v u">value</span><span class="b3">)</span>;</div>
<div class="ln" style="top:448px;width:58.5px">27</div>
<div class="cl" style="top:448px;left:84.5px"><span class="b2">}</span><span class="b1">)</span>;</div>
<div class="ln" style="top:474px;width:58.5px">28</div>
<div class="cl" style="top:474px;left:84.5px"><span class="k">const</span> <span class="f">minNumber</span> = <span class="b1">()</span> <span class="k">=&gt;</span> <span class="b1">{</span></div>
<div class="ln" style="top:500px;width:58.5px">29</div>
<div class="cl" style="top:500px;left:84.5px">  <span class="v">console</span>.<span class="f">log</span><span class="b2">(</span><span class="s">"minNumber"</span><span class="b2">)</span>;</div>
<div class="ln" style="top:526px;width:58.5px">30</div>
<div class="cl" style="top:526px;left:84.5px">  <span class="c">return</span> <span class="v">Math</span>.<span class="f">min</span><span class="b2">(</span><span class="dots h2">...</span><span class="n">arrayNumber</span>.<span class="v u">value</span><span class="b2">)</span>;</div>
<div class="ln" style="top:552px;width:58.5px">31</div>
<div class="cl" style="top:552px;left:84.5px"><span class="b1">}</span>;</div>
<div class="ln" style="top:578px;width:58.5px">32</div>
<div class="cl" style="top:578px;left:84.5px"><span class="k">const</span> <span class="f">findMinNumber</span> = <span class="b1">()</span> <span class="k">=&gt;</span> <span class="b1">{</span></div>
<div class="ln" style="top:604px;width:58.5px">33</div>
<div class="cl" style="top:604px;left:84.5px">  <span class="v">console</span>.<span class="f">log</span><span class="b2">(</span><span class="s">"findMinNumber"</span><span class="b2">)</span>;</div>
<div class="ln" style="top:630px;width:58.5px">34</div>
<div class="cl" style="top:630px;left:84.5px">  <span class="n">min</span>.<span class="v u">value</span> = <span class="v">Math</span>.<span class="f">min</span><span class="b2">(</span><span class="dots h2">...</span><span class="n">arrayNumber</span>.<span class="v u">value</span><span class="b2">)</span>;</div>
<div class="ln" style="top:656px;width:58.5px">35</div>
<div class="cl" style="top:656px;left:84.5px"><span class="b1">}</span>;</div>
<div class="ln" style="top:682px;width:58.5px">36</div>
<div class="cl" style="top:682px;left:84.5px"><span class="g">&lt;/</span><span class="k">script</span><span class="g">&gt;</span></div>
<div class="ln" style="top:708px;width:58.5px">37</div>
<div class="cl" style="top:708px;left:84.5px"><span class="g">&lt;</span><span class="k">style</span><span class="g">&gt;</span> </div>
<div class="a" style="left:0;top:0;width:842px;height:53px;background:#1f1f1f;box-shadow:0 1px 3px rgba(0,0,0,.9);border-bottom:1px solid #050505"></div>
<div class="ln" style="top:0;width:58.5px">1</div><div class="cl" style="top:0;left:84.5px"><span class="g">&lt;</span><span class="k">template</span><span class="g">&gt;</span></div>
<div class="ln" style="top:26px;width:58.5px">3</div><div class="cl" style="top:26px;left:84.5px">  <span class="g">&lt;</span><span class="k">div</span><span class="g">&gt;</span></div>
<div class="a" style="left:84px;top:702px;width:486px;height:12px;background:rgba(121,121,121,.4)"></div></div>
<div class="a" style="left:986px;top:92px;width:1px;height:716px;background:#383838;"></div>
<div class="a" style="left:1827px;top:92px;width:1px;height:716px;background:#181818;"></div>
<svg style="left:0;top:0;opacity:.62" width="1920" height="1080" viewBox="0 0 1920 1080"><rect x="1836.5" y="92" width="9.4" height="1.1" fill="#3f6f96"/><rect x="1838.5" y="94" width="3.4" height="1.1" fill="#3f6f96"/><rect x="1843.1" y="94" width="11.4" height="1.1" fill="#c4c4c4"/><rect x="1855.7" y="94" width="4.4" height="1.1" fill="#3f6f96"/><rect x="1838.5" y="96" width="4.4" height="1.1" fill="#3f6f96"/><rect x="1840.5" y="98" width="2.4" height="1.1" fill="#3f6f96"/><rect x="1844.1" y="98" width="10.4" height="1.1" fill="#c4c4c4"/><rect x="1855.7" y="98" width="14.4" height="1.1" fill="#6c97ad"/><rect x="1871.3" y="98" width="3.4" height="1.1" fill="#3f6f96"/><rect x="1840.5" y="100" width="2.4" height="1.1" fill="#3f6f96"/><rect x="1844.1" y="100" width="14.4" height="1.1" fill="#c4c4c4"/><rect x="1859.7" y="100" width="12.4" height="1.1" fill="#6c97ad"/><rect x="1873.3" y="100" width="3.4" height="1.1" fill="#3f6f96"/><rect x="1840.5" y="102" width="41.4" height="1.1" fill="#4a6b3f"/><rect x="1840.5" y="104" width="2.4" height="1.1" fill="#3f6f96"/><rect x="1842.5" y="106" width="5.4" height="1.1" fill="#3f6f96"/><rect x="1849.1" y="106" width="19.4" height="1.1" fill="#c4c4c4"/><rect x="1869.7" y="106" width="6.4" height="1.1" fill="#6c97ad"/><rect x="1877.3" y="106" width="5.4" height="1.1" fill="#3f6f96"/><rect x="1842.5" y="108" width="7.4" height="1.1" fill="#3f6f96"/><rect x="1851.1" y="108" width="9.4" height="1.1" fill="#6c97ad"/><rect x="1861.7" y="108" width="15.4" height="1.1" fill="#97976f"/><rect x="1878.3" y="108" width="7.4" height="1.1" fill="#c4c4c4"/><rect x="1886.9" y="108" width="8.4" height="1.1" fill="#3f6f96"/><rect x="1840.5" y="110" width="3.4" height="1.1" fill="#3f6f96"/><rect x="1840.5" y="112" width="2.4" height="1.1" fill="#3f6f96"/><rect x="1844.1" y="112" width="19.4" height="1.1" fill="#c4c4c4"/><rect x="1864.7" y="112" width="14.4" height="1.1" fill="#97976f"/><rect x="1880.3" y="112" width="3.4" height="1.1" fill="#3f6f96"/><rect x="1840.5" y="114" width="49.4" height="1.1" fill="#4a6b3f"/><rect x="1840.5" y="116" width="2.4" height="1.1" fill="#3f6f96"/><rect x="1844.1" y="116" width="9.4" height="1.1" fill="#c4c4c4"/><rect x="1854.7" y="116" width="10.4" height="1.1" fill="#6c97ad"/><rect x="1866.3" y="116" width="3.4" height="1.1" fill="#3f6f96"/><rect x="1840.5" y="118" width="2.4" height="1.1" fill="#3f6f96"/><rect x="1844.1" y="118" width="10.4" height="1.1" fill="#c4c4c4"/><rect x="1855.7" y="118" width="35.4" height="1.1" fill="#97976f"/><rect x="1892.3" y="118" width="3.4" height="1.1" fill="#3f6f96"/><rect x="1838.5" y="120" width="5.4" height="1.1" fill="#3f6f96"/><rect x="1836.5" y="122" width="10.4" height="1.1" fill="#3f6f96"/><rect x="1836.5" y="124" width="6.4" height="1.1" fill="#3f6f96"/><rect x="1844.1" y="124" width="5.4" height="1.1" fill="#6c97ad"/><rect x="1850.7" y="124" width="4.4" height="1.1" fill="#6c97ad"/><rect x="1856.3" y="124" width="3.4" height="1.1" fill="#8d6654"/><rect x="1836.5" y="126" width="5.4" height="1.1" fill="#84608a"/><rect x="1843.1" y="126" width="6.4" height="1.1" fill="#6c97ad"/><rect x="1850.7" y="126" width="4.4" height="1.1" fill="#84608a"/><rect x="1856.3" y="126" width="8.4" height="1.1" fill="#8d6654"/><rect x="1836.5" y="128" width="5.4" height="1.1" fill="#84608a"/><rect x="1843.1" y="128" width="16.4" height="1.1" fill="#97976f"/><rect x="1860.7" y="128" width="4.4" height="1.1" fill="#84608a"/><rect x="1866.3" y="128" width="5.4" height="1.1" fill="#8d6654"/><rect x="1836.5" y="130" width="4.4" height="1.1" fill="#3f6f96"/><rect x="1842.1" y="130" width="11.4" height="1.1" fill="#6c97ad"/><rect x="1854.7" y="130" width="4.4" height="1.1" fill="#97976f"/><rect x="1860.3" y="130" width="39.4" height="1.1" fill="#c4c4c4"/><rect x="1836.5" y="132" width="4.4" height="1.1" fill="#3f6f96"/><rect x="1842.1" y="132" width="3.4" height="1.1" fill="#6c97ad"/><rect x="1846.7" y="132" width="7.4" height="1.1" fill="#97976f"/><rect x="1836.5" y="134" width="4.4" height="1.1" fill="#3f6f96"/><rect x="1842.1" y="134" width="7.4" height="1.1" fill="#6c97ad"/><rect x="1850.7" y="134" width="4.4" height="1.1" fill="#97976f"/><rect x="1856.3" y="134" width="39.4" height="1.1" fill="#8d6654"/><rect x="1836.5" y="136" width="4.4" height="1.1" fill="#3f6f96"/><rect x="1842.1" y="136" width="9.4" height="1.1" fill="#6c97ad"/><rect x="1852.7" y="136" width="11.4" height="1.1" fill="#97976f"/><rect x="1865.3" y="136" width="6.4" height="1.1" fill="#3f6f96"/><rect x="1838.5" y="138" width="10.4" height="1.1" fill="#6c97ad"/><rect x="1850.1" y="138" width="11.4" height="1.1" fill="#8d6654"/><rect x="1838.5" y="140" width="10.4" height="1.1" fill="#6c97ad"/><rect x="1850.1" y="140" width="12.4" height="1.1" fill="#6c97ad"/><rect x="1838.5" y="142" width="5.4" height="1.1" fill="#84608a"/><rect x="1845.1" y="142" width="8.4" height="1.1" fill="#6c97ad"/><rect x="1854.7" y="142" width="21.4" height="1.1" fill="#6c97ad"/><rect x="1836.5" y="144" width="2.4" height="1.1" fill="#c4c4c4"/><rect x="1836.5" y="146" width="4.4" height="1.1" fill="#3f6f96"/><rect x="1842.1" y="146" width="9.4" height="1.1" fill="#97976f"/><rect x="1852.7" y="146" width="9.4" height="1.1" fill="#3f6f96"/><rect x="1838.5" y="148" width="10.4" height="1.1" fill="#6c97ad"/><rect x="1850.1" y="148" width="11.4" height="1.1" fill="#8d6654"/><rect x="1838.5" y="150" width="5.4" height="1.1" fill="#84608a"/><rect x="1845.1" y="150" width="8.4" height="1.1" fill="#6c97ad"/><rect x="1854.7" y="150" width="21.4" height="1.1" fill="#6c97ad"/><rect x="1836.5" y="152" width="1.4" height="1.1" fill="#c4c4c4"/><rect x="1836.5" y="154" width="4.4" height="1.1" fill="#3f6f96"/><rect x="1842.1" y="154" width="13.4" height="1.1" fill="#97976f"/><rect x="1856.7" y="154" width="9.4" height="1.1" fill="#3f6f96"/><rect x="1838.5" y="156" width="10.4" height="1.1" fill="#6c97ad"/><rect x="1850.1" y="156" width="15.4" height="1.1" fill="#8d6654"/><rect x="1838.5" y="158" width="9.4" height="1.1" fill="#6c97ad"/><rect x="1849.1" y="158" width="7.4" height="1.1" fill="#6c97ad"/><rect x="1857.7" y="158" width="21.4" height="1.1" fill="#6c97ad"/><rect x="1836.5" y="160" width="1.4" height="1.1" fill="#c4c4c4"/><rect x="1836.5" y="162" width="8.4" height="1.1" fill="#3f6f96"/><rect x="1836.5" y="164" width="5.4" height="1.1" fill="#3f6f96"/><rect x="1843.1" y="164" width="6.4" height="1.1" fill="#6c97ad"/><rect x="1836.5" y="166" width="3.4" height="1.1" fill="#c4c4c4"/><rect x="1836.5" y="168" width="7.4" height="1.1" fill="#3f6f96"/></svg>
<div class="a" style="left:1836px;top:127px;width:70px;height:1px;background:#b32d2d;"></div>
<div class="a" style="left:1857px;top:126.5px;width:9px;height:1.5px;background:#e04545;"></div>
<div class="a" style="left:1906px;top:92px;width:14px;height:716px;background:#1f1f1f;border-left:1px solid #191919"></div>
<div class="a" style="left:1906px;top:189px;width:14px;height:304px;background:#434343;"></div>
<div class="a" style="left:1916px;top:280px;width:4px;height:9px;background:#d21f28;"></div>
<div class="a" style="left:1906px;top:367px;width:14px;height:2px;background:#b8b8b8;"></div>
<svg style="left:1072px;top:488px" width="12" height="16" viewBox="0 0 12 16" ><path d="M6 0.5C2.8 0.5 0.8 2.8 0.8 5.4 0.8 7.4 2 8.6 2.9 9.6V11.5H9.1V9.6C10 8.6 11.2 7.4 11.2 5.4 11.2 2.8 9.2 0.5 6 0.5z" fill="#ffcc00"/><rect x="3.2" y="12.3" width="5.6" height="1.3" fill="#ffcc00"/><rect x="3.8" y="14.2" width="4.4" height="1.3" fill="#ffcc00"/></svg>
<div class="ed" style="left:1296px;top:443px;width:472px;height:70px;background:#202020;border:1px solid #454545;border-radius:3px;box-shadow:0 2px 8px rgba(0,0,0,.5)"><div class="cl" style="left:9px;top:4px"><span class="k">const</span> <span class="n">arrayNumber</span>: <span class="ty">Ref</span>&lt;<span class="ty">number</span>[], <span class="ty">number</span>[]&gt;</div><div class="a" style="left:0;top:34px;width:470px;height:1px;background:#3a3a3a"></div><div class="cl" style="left:9px;top:39px"><span class="k">const</span> <span class="n">arrayNumber</span>: <span class="ty">Ref</span>&lt;<span class="ty">number</span>[], <span class="ty">number</span>[]&gt;</div></div>
<svg style="left:1293px;top:518px" width="8" height="17" viewBox="0 0 8 17" ><path d="M0.5 0.5Q3 0.5 4 2Q5 0.5 7.5 0.5M0.5 16.5Q3 16.5 4 15Q5 16.5 7.5 16.5M4 2V15" fill="none" stroke="#e8e8e8" stroke-width="1"/></svg>
<div class="a" style="left:48px;top:808px;width:1872px;height:210px;background:#181818;border-top:1px solid #2b2b2b"></div>
<div class="t" style="left:68.5px;top:815.6px;font-size:10px;color:#9d9d9d;letter-spacing:-0.354px;">PROBLEMS</div>
<div class="a" style="left:125px;top:816.5px;width:17px;height:17px;border-radius:9px;background:#0078d4;color:#fff;font-size:11px;line-height:17px;text-align:center">1</div>
<div class="t" style="left:163.75px;top:815.6px;font-size:10px;color:#9d9d9d;letter-spacing:-0.018px;">OUTPUT</div>
<div class="t" style="left:229.25px;top:815.6px;font-size:10px;color:#9d9d9d;letter-spacing:-0.135px;">DEBUG CONSOLE</div>
<div class="t" style="left:338px;top:815.6px;font-size:10px;color:#e7e7e7;letter-spacing:0.148px;">TERMINAL</div>
<div class="a" style="left:336px;top:835px;width:56px;height:1px;background:#0078d4;"></div>
<div class="t" style="left:413.75px;top:815.6px;font-size:10px;color:#9d9d9d;letter-spacing:-0.506px;">PORTS</div>
<div class="t" style="left:68.5px;top:847px;font-size:12.8px;letter-spacing:-0.68px;-webkit-text-stroke:0.2px;font-family:'Liberation Mono',monospace;color:#ccc">15:11:15 <b style="color:#29b8db">[vite]</b> <span style="color:#6b6b6b">(client)</span> <span style="color:#23d18b">hmr update</span> /src/components/Vue2_4.vue</div>
<div class="a" style="left:68px;top:866px;width:7px;height:15px;background:transparent;border:1px solid #ccc"></div>
<svg style="left:1802px;top:818px" width="13" height="13" viewBox="0 0 13 13" ><path d="M6.5 0V13M0 6.5H13" stroke="#ccc" stroke-width="1.1"/></svg>
<svg style="left:1820px;top:822.5px" width="8" height="5" viewBox="0 0 8 5" ><path d="M0.5 0.5L4 4 7.5 0.5" fill="none" stroke="#ccc" stroke-width="1.1"/></svg>
<svg style="left:1839.6px;top:823.5px" width="13" height="3" viewBox="0 0 13 3" ><circle cx="1.5" cy="1.5" r="1.1" fill="#ccc"/><circle cx="6.5" cy="1.5" r="1.1" fill="#ccc"/><circle cx="11.5" cy="1.5" r="1.1" fill="#ccc"/></svg>
<svg style="left:1866px;top:821px" width="10" height="6" viewBox="0 0 10 6" ><path d="M0.5 5.5L5 1 9.5 5.5" fill="none" stroke="#ccc" stroke-width="1.2"/></svg>
<svg style="left:1892.5px;top:820.0px" width="9" height="9" viewBox="0 0 9 9" ><path d="M0 0L9 9M9 0L0 9" stroke="#ccc" stroke-width="1.2" fill="none"/></svg>
<div class="a" style="left:1787px;top:848px;width:1px;height:170px;background:#0d0d0d;"></div>
<div class="a" style="left:1788px;top:849px;width:3px;height:2px;background:#6a6a6a;"></div>
<div class="a" style="left:1800px;top:841px;width:1px;height:177px;background:#2b2b2b;"></div>
<div class="a" style="left:1801px;top:841px;width:119px;height:22px;background:#343437;border-left:1px solid #0078d4"></div>
<svg style="left:1811px;top:845px" width="16" height="14" viewBox="0 0 16 14" ><g fill="none" stroke="#ccc" stroke-width="1.1" stroke-linejoin="round"><path d="M1.9 0.6H15.3L14 13.4H0.6z"/><path d="M4.4 3.8L8 6.8 4 9.8M8.2 10H11.6"/></g></svg>
<div class="t" style="left:1830.8px;top:842.0px;font-size:12.6px;color:#e0e0e0;letter-spacing:0.075px;">esbuild</div>
<svg style="left:1811px;top:867px" width="16" height="14" viewBox="0 0 16 14" ><g fill="none" stroke="#ccc" stroke-width="1.1" stroke-linejoin="round"><path d="M1.9 0.6H15.3L14 13.4H0.6z"/><path d="M4.4 3.8L8 6.8 4 9.8M8.2 10H11.6"/></g></svg>
<div class="t" style="left:1830.8px;top:864.5px;font-size:12.6px;color:#ccc;letter-spacing:0.100px;">powershell</div>
<div class="a" style="left:0px;top:1018px;width:1920px;height:22px;background:#181818;border-top:1px solid #2b2b2b"></div>
<div class="a" style="left:0px;top:1018px;width:34px;height:22px;background:#0078d4;"></div>
<svg style="left:12.5px;top:1023.5px" width="10" height="12" viewBox="0 0 10 12" ><path d="M0.6 5.6L4.6 8.6 0.6 11.4M9.4 0.6L5.4 3.4 9.4 6.4" fill="none" stroke="#fff" stroke-width="1.3"/></svg>
<svg style="left:42px;top:1022.5px" width="13" height="13" viewBox="0 0 13 13" ><circle cx="6.5" cy="6.5" r="5.9" fill="none" stroke="#ccc" stroke-width="1.1"/><path d="M4.1 4.1L8.9 8.9M8.9 4.1L4.1 8.9" stroke="#ccc" stroke-width="1.1"/></svg>
<div class="t" style="left:60px;top:1019.5px;font-size:12.5px;color:#ccc;letter-spacing:-1.453px;">1</div>
<svg style="left:70.5px;top:1023px" width="12" height="12" viewBox="0 0 12 12" ><path d="M6 0.8L11.4 11.2H0.6z" fill="none" stroke="#ccc" stroke-width="1.1" stroke-linejoin="round"/><path d="M6 4.4V8M6 9V10.2" stroke="#ccc" stroke-width="1.1"/></svg>
<div class="t" style="left:86px;top:1019.5px;font-size:12.5px;color:#ccc;letter-spacing:0.047px;">0</div>
<div class="t" style="left:1464.5px;top:1019.5px;font-size:12.3px;color:#ccc;letter-spacing:-0.349px;">Ln 26, Col 22 (3 selected)</div>
<div class="t" style="left:1612.5px;top:1019.5px;font-size:12.3px;color:#ccc;letter-spacing:-0.661px;">Spaces: 4</div>
<div class="t" style="left:1677px;top:1019.5px;font-size:12.3px;color:#ccc;letter-spacing:-0.619px;">UTF-8</div>
<div class="a" style="left:0px;top:1040px;width:1920px;height:40px;background:linear-gradient(90deg,#20333d 0%,#1f3140 45%,#1b2b40 75%,#1a2840 100%);"></div>
<svg style="left:15.5px;top:1051.5px" width="17" height="16" viewBox="0 0 17 16" ><g fill="#fff"><path d="M0 2.3L7 1.3V7.6H0zM7.9 1.2L17 0V7.6H7.9zM0 8.5H7V14.8L0 13.8zM7.9 8.5H17V16L7.9 14.9z"/></g></svg>
<svg style="left:64px;top:1050px" width="14" height="20" viewBox="0 0 14 20" ><path d="M0 2.2L1.5 0.6H7.2L8.6 2.2H14V18.2L0 19.6z" fill="#e9bb52"/><path d="M1.2 3.4H14V17L6 19.4 1.2 17.8z" fill="#fbe08a"/><path d="M0 2.2V19.6L5.6 18.2V5.4z" fill="#f6d06a"/></svg>
<div class="t" style="left:89.4px;top:1050.0px;font-size:13px;color:#fff;letter-spacing:-0.148px;">src</div>
<div class="a" style="left:55.5px;top:1078px;width:151.2px;height:2px;background:#76b9ed;"></div>
<svg style="left:222px;top:1048.5px" width="23" height="23" viewBox="0 0 23 23" ><circle cx="11.5" cy="11.5" r="11.5" fill="#fff"/><path d="M11.5 11.5L1.54 5.75A11.5 11.5 0 0 1 21.46 5.75z" fill="#ea4335"/><path d="M11.5 11.5L21.46 5.75A11.5 11.5 0 0 1 11.5 23z" fill="#fbbc05"/><path d="M11.5 11.5L11.5 23A11.5 11.5 0 0 1 1.54 5.75z" fill="#34a853"/><circle cx="11.5" cy="11.5" r="5.3" fill="#fff"/><circle cx="11.5" cy="11.5" r="4.2" fill="#4285f4"/></svg>
<div class="t" style="left:249.7px;top:1050.0px;font-size:13px;color:#fff;letter-spacing:0.185px;">Vite App - Googl...</div>
<div class="a" style="left:216px;top:1078px;width:151.5px;height:2px;background:#76b9ed;"></div>
<div class="a" style="left:373px;top:1040px;width:160px;height:40px;background:#3c525e;"></div>
<svg style="left:384px;top:1049px" width="23" height="22" viewBox="0 0 23 22" ><path d="M17 0L23 2.8V19.2L17 22 5.6 11.6 2 14.4 0 13.4V8.6L2 7.6 5.6 10.4z" fill="#2489ca"/><path d="M17 0L23 2.8V19.2L17 22z" fill="#3aa7f0"/><path d="M17 6.2L10.2 11 17 15.8z" fill="#3c525e"/><path d="M2 9.2L4.2 11 2 12.8z" fill="#3c525e"/></svg>
<div class="t" style="left:411px;top:1050.0px;font-size:13px;color:#fff;letter-spacing:-0.330px;">Vue2_4.vue - cha...</div>
<div class="a" style="left:373px;top:1078px;width:160px;height:2px;background:#8ac4f0;"></div>
<svg style="left:543.8px;top:1051px" width="22.5" height="17" viewBox="0 0 22.5 17" ><rect width="22.5" height="17" fill="#0c0c0c" stroke="#9a9a9a" stroke-width="1"/><rect x="0.5" y="0.5" width="21.5" height="2.6" fill="#dcdcdc"/><path d="M3 5.4H5.5M3.2 6.8H6.2M7 8.6H12" stroke="#ddd" stroke-width="1"/></svg>
<div class="t" style="left:572px;top:1050px;font-size:13.3px;color:#fff;width:67px;letter-spacing:0">选择管理员</div>
<div class="t" style="left:639px;top:1050.0px;font-size:11.5px;color:#fff;letter-spacing:-0.379px;">: C:\Wi...</div>
<div class="a" style="left:538.4px;top:1078px;width:151.60000000000002px;height:2px;background:#76b9ed;"></div>
<svg style="left:705.5px;top:1049px" width="23" height="22" viewBox="0 0 23 22" ><rect x="9" y="2" width="14" height="18" rx="1.2" fill="#f4f4f4" stroke="#d24726" stroke-width="1"/><path d="M12.5 6H20M12.5 9.5H20M12.5 13H20M12.5 16.5H20" stroke="#d24726" stroke-width="1.6"/><path d="M0 2.4L13 0V22L0 19.6z" fill="#d24726"/><path d="M3.6 6H7.2Q10 6 10 8.8 10 11.6 7.2 11.6H5.6V16H3.6zM5.6 7.7V9.9H7Q8 9.9 8 8.8 8 7.7 7 7.7z" fill="#fff"/></svg>
<div class="t" style="left:733px;top:1050.0px;font-size:13px;color:#fff;letter-spacing:-0.715px;">vuejs3.x-</div>
<div class="t" style="left:778.6px;top:1050px;font-size:13.2px;color:#fff;width:14px">第</div>
<div class="t" style="left:792px;top:1050.0px;font-size:13px;color:#fff;letter-spacing:-0.234px;">2</div>
<div class="t" style="left:799px;top:1050px;font-size:13.2px;color:#fff;width:14px">章</div>
<div class="t" style="left:812.5px;top:1050.0px;font-size:13px;color:#fff;letter-spacing:-0.164px;">Vue...</div>
<div class="a" style="left:698.8px;top:1078px;width:152.20000000000005px;height:2px;background:#76b9ed;"></div>
<svg style="left:865.3px;top:1049px" width="23" height="22" viewBox="0 0 23 22" ><rect x="9" y="2" width="14" height="18" rx="1.2" fill="#f4f4f4" stroke="#d24726" stroke-width="1"/><path d="M12.5 6H20M12.5 9.5H20M12.5 13H20M12.5 16.5H20" stroke="#d24726" stroke-width="1.6"/><path d="M0 2.4L13 0V22L0 19.6z" fill="#d24726"/><path d="M3.6 6H7.2Q10 6 10 8.8 10 11.6 7.2 11.6H5.6V16H3.6zM5.6 7.7V9.9H7Q8 9.9 8 8.8 8 7.7 7 7.7z" fill="#fff"/></svg>
<div class="t" style="left:893px;top:1050.0px;font-size:13px;color:#fff;letter-spacing:-0.231px;">V4.4.1 - PowerPoi...</div>
<div class="a" style="left:859px;top:1078px;width:151.79999999999995px;height:2px;background:#76b9ed;"></div>
<svg style="left:1572px;top:1052.5px" width="16" height="16" viewBox="0 0 16 16" ><rect x="0" y="1" width="16" height="15" rx="4.5" fill="#f5a623"/><circle cx="3" cy="2.6" r="2.4" fill="#f7b955"/><circle cx="13" cy="2.6" r="2.4" fill="#f7b955"/><circle cx="8" cy="8.5" r="4.6" fill="#fbe3b0"/><circle cx="8" cy="8.5" r="3" fill="#f08c1e"/></svg>
<svg style="left:1643.5px;top:1053px" width="17" height="15" viewBox="0 0 17 15" ><g fill="none" stroke="#fff" stroke-width="1.1"><path d="M3.6 1.2H16.2V10.6H6"/><rect x="0.6" y="0.6" width="3.2" height="3.2"/><path d="M2.2 3.8V8M1.4 12.8V8.8H5.2V12.8M5.2 10.6H6M9 10.6V13.6M5.6 13.8H12.6"/></g></svg>
<svg style="left:1692.5px;top:1052.5px" width="16" height="16" viewBox="0 0 16 16" ><rect x="0.5" y="0.5" width="13.5" height="13.5" rx="1.5" fill="#e9eef2"/><path d="M2.5 3Q6 2 8.5 5.5 10.5 8.5 11 12.5L9 11 8 13.5Q7 9 4.5 7.5 2.5 6 2.5 3z" fill="#3e6e8e"/><circle cx="12" cy="12.2" r="3.6" fill="#3aa655"/><path d="M10.9 10.4L13.9 12.2 10.9 14z" fill="#fff"/></svg>
<div class="t" style="left:1740.5px;top:1050.5px;font-size:14.5px;color:#fff;width:15px">英</div>
<svg style="left:1768px;top:1052.5px" width="16" height="16" viewBox="0 0 24 24" ><g transform="rotate(-8 12 12)"><rect x="1" y="1.5" width="22" height="21" rx="4.5" fill="#f0531f"/><path d="M17.5 6.6Q12 4.4 8.2 6.4 5.6 8.4 8.4 10.4L14.6 12.6Q17.4 14.2 14.8 16.2 11 17.8 6 15.6" fill="none" stroke="#fff" stroke-width="3.4" stroke-linecap="round"/></g></svg>
<div class="t" style="left:1816px;top:1040.5px;font-size:13px;color:#fff;letter-spacing:-0.516px;">15:11</div>
<div class="t" style="left:1804.5px;top:1059.5px;font-size:13px;color:#fff;letter-spacing:0.049px;">2025/3/3</div>
<svg style="left:1879px;top:1052.5px" width="16" height="16" viewBox="0 0 16 16" ><path d="M0.6 0.6H15.4V11.6H11.4L8 15 8 11.6H0.6z" fill="none" stroke="#fff" stroke-width="1.1" stroke-linejoin="round"/></svg>
<div class="a" style="left:1915px;top:1040px;width:1px;height:40px;background:#4a5868;"></div>
<div class="a" style="left:1732px;top:1018px;width:188px;height:22px;background:#fff;clip-path:polygon(8px 0,100% 0,100% 100%,0 100%)"></div>
<svg style="left:1713px;top:1013.5px" width="29" height="29" viewBox="0 0 24 24" ><g transform="rotate(-8 12 12)"><rect x="1" y="1.5" width="22" height="21" rx="4.5" fill="#f0531f"/><path d="M17.5 6.6Q12 4.4 8.2 6.4 5.6 8.4 8.4 10.4L14.6 12.6Q17.4 14.2 14.8 16.2 11 17.8 6 15.6" fill="none" stroke="#fff" stroke-width="3.4" stroke-linecap="round"/></g></svg>
<div class="t" style="left:1747.5px;top:1019px;font-size:15.5px;font-weight:bold;color:#1e6fd0;width:16px;-webkit-text-stroke:0.6px #1e6fd0">英</div>
<svg style="left:1771px;top:1022px" width="11" height="12" viewBox="0 0 11 12" ><circle cx="2.2" cy="3" r="1.8" fill="#1e6fd0"/><path d="M7.4 5.6Q10.2 6 8.8 9L7.6 11" fill="none" stroke="#1e6fd0" stroke-width="1.8" stroke-linecap="round"/></svg>
<svg style="left:1791px;top:1020.5px" width="17" height="17" viewBox="0 0 17 17" ><circle cx="8.5" cy="8.5" r="7.4" fill="none" stroke="#1e6fd0" stroke-width="1.6"/><path d="M6 5.2V7.6M11 5.2V7.6" stroke="#1e6fd0" stroke-width="1.7" stroke-linecap="round"/><path d="M4.6 10Q8.5 14.6 12.4 10" fill="none" stroke="#1e6fd0" stroke-width="1.4"/></svg>
<svg style="left:1815px;top:1020.5px" width="12" height="17" viewBox="0 0 12 17" ><rect x="3.4" y="0.4" width="5.2" height="10" rx="2.6" fill="#1e6fd0"/><path d="M0.8 7.4Q0.8 12.6 6 12.6 11.2 12.6 11.2 7.4M6 12.6V16M3 16.2H9" fill="none" stroke="#1e6fd0" stroke-width="1.5"/></svg>
<svg style="left:1835px;top:1022.5px" width="16" height="12" viewBox="0 0 16 12" ><rect x="0.7" y="0.7" width="14.6" height="10.6" rx="1.6" fill="none" stroke="#1e6fd0" stroke-width="1.4"/><path d="M3 3.6H13M3 5.8H13" stroke="#1e6fd0" stroke-width="1.4" stroke-dasharray="1.4 1.2"/><path d="M4.4 8.4H11.6" stroke="#1e6fd0" stroke-width="1.5"/></svg>
<svg style="left:1860px;top:1021px" width="13" height="16" viewBox="0 0 13 16" ><circle cx="5.6" cy="3.6" r="3.2" fill="#b9bcc2"/><path d="M0 14Q0 7.4 5.6 7.4 9.6 7.4 10.6 10.6V14z" fill="#b9bcc2"/><rect x="7.6" y="9.6" width="5" height="5.6" rx="0.8" fill="#d7d9dd"/></svg>
<svg style="left:1880.5px;top:1022px" width="14" height="14" viewBox="0 0 14 14" ><path d="M4.4 0.4Q7 2.4 9.6 0.4L13.8 3 12.2 6.2 10.8 5.6V13.6H3.2V5.6L1.8 6.2 0.2 3z" fill="#1e6fd0"/></svg>
<svg style="left:1901px;top:1022px" width="14" height="14" viewBox="0 0 14 14" ><g fill="#1e6fd0"><rect x="0" y="0" width="6" height="6" rx=".8"/><rect x="7.6" y="0" width="6" height="6" rx=".8" fill="#4a9ae8"/><rect x="0" y="7.6" width="6" height="6" rx=".8"/><rect x="7.6" y="7.6" width="6" height="6" rx=".8"/></g></svg>
</body></html>
